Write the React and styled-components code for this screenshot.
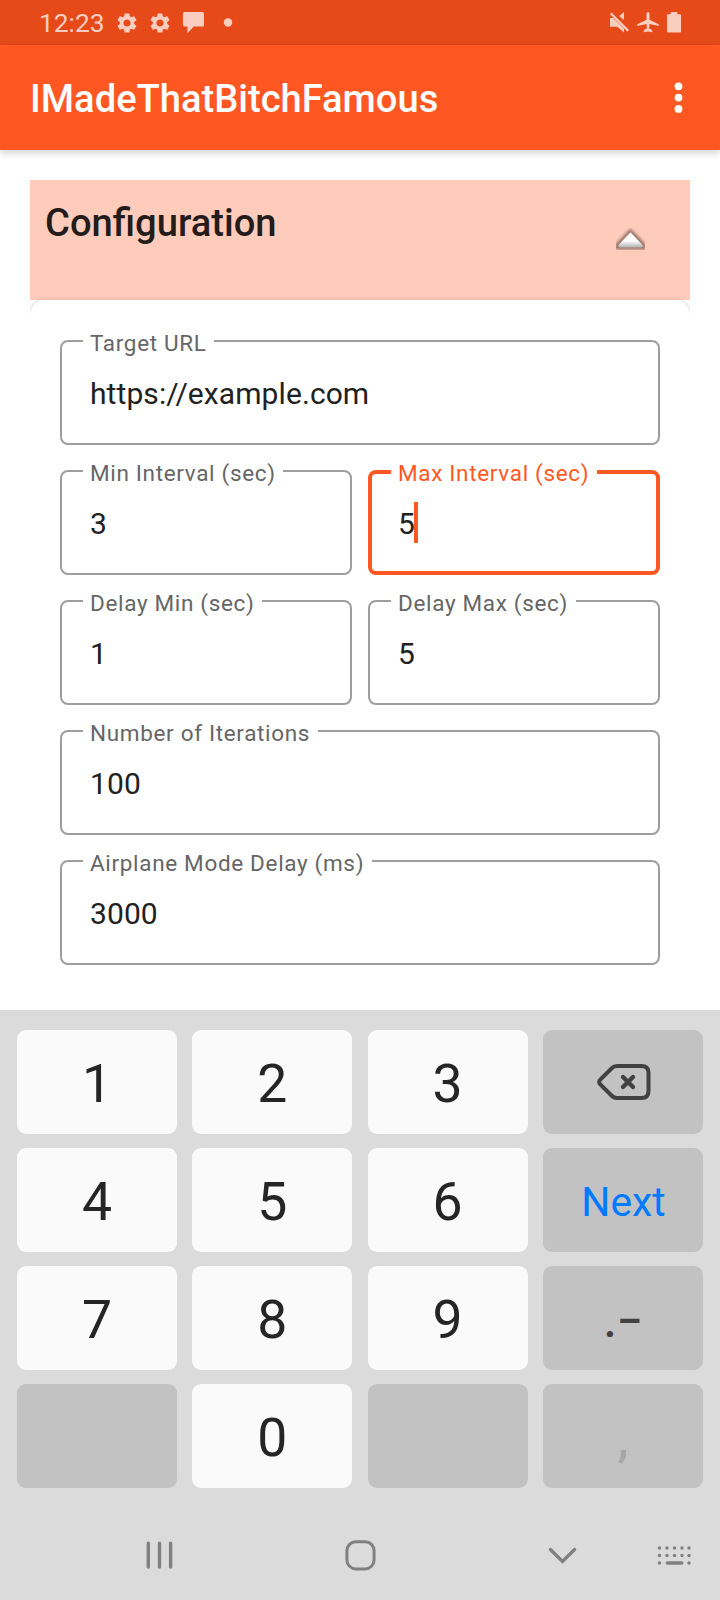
import React from "react";
import styled, { createGlobalStyle } from "styled-components";
import { MdSettings } from "react-icons/md";

const GlobalStyle = createGlobalStyle`
  *, *::before, *::after { box-sizing: border-box; }
  html, body { margin: 0; padding: 0; background: #fff; }
  body { font-family: Roboto, "Noto Sans", sans-serif; }
  svg { display: block; flex: none; }
`;

const Screen = styled.div`
  width: 720px;
  height: 1600px;
  display: flex;
  flex-direction: column;
  overflow: hidden;
  background: #fff;
`;

const StatusBar = styled.header`
  height: 45px;
  flex: none;
  display: flex;
  justify-content: space-between;
  padding: 0 39px;
  background: #e64a19;
  color: #facdc1;
`;

const StatusGroup = styled.div`
  display: flex;
  align-items: center;
  height: 45px;
  gap: ${(p) => p.$gap}px;
`;

const Clock = styled.span`
  font-size: 26.3px;
  line-height: 45px;
  width: 67px;
  padding-top: 1px;
  margin-right: 9px;
`;

const AppBar = styled.div`
  height: 105px;
  flex: none;
  display: flex;
  align-items: center;
  justify-content: space-between;
  padding: 0 36px 0 30px;
  background: #ff5722;
  color: #fff;
  box-shadow: 0 3px 8px rgba(0, 0, 0, 0.18);
`;

const Title = styled.h1`
  margin: 2px 0 0;
  font-size: 38.12px;
  line-height: 44px;
  font-weight: 500;
`;

const Content = styled.main`
  flex: 1;
  min-height: 0;
  display: flex;
  flex-direction: column;
  padding: 30px 30px 0;
`;

const SectionHeader = styled.div`
  height: 120px;
  flex: none;
  display: flex;
  justify-content: space-between;
  padding: 0 44px 0 15px;
  background: #ffccbc;
`;

const SectionTitle = styled.h2`
  margin: 21px 0 0;
  font-size: 38.15px;
  line-height: 44px;
  font-weight: 500;
  color: #231c1a;
`;

const ExpandIcon = styled.svg`
  margin-top: 48px;
`;

const Card = styled.section`
  flex: 1;
  display: flex;
  flex-direction: column;
  gap: 25px;
  padding: 40px 30px 0;
  border-radius: 15px 15px 0 0;
  background: #fff;
  box-shadow: 0 2px 6px rgba(0, 0, 0, 0.32);
  clip-path: inset(-10px 0 0 0);
`;

const FieldRow = styled.div`
  display: grid;
  grid-auto-flow: column;
  grid-auto-columns: minmax(0, 1fr);
  gap: 16px;
`;

const FieldBox = styled.div`
  height: 105px;
  border: ${(p) => (p.$focused ? "4px solid #ff5722" : "2px solid #9e9e9e")};
  border-radius: 8px;
  padding-left: ${(p) => (p.$focused ? 19 : 21)}px;
`;

const FieldLabel = styled.label`
  display: block;
  width: fit-content;
  height: 28px;
  margin-top: ${(p) => (p.$focused ? -15 : -13)}px;
  padding: 0 7.5px 0 7px;
  background: #fff;
  font-size: 22.5px;
  line-height: 28px;
  letter-spacing: 0.67px;
  white-space: nowrap;
  color: ${(p) => (p.$focused ? "#ff5722" : "#666")};
`;

const FieldValue = styled.div`
  display: flex;
  align-items: center;
  height: 42px;
  margin-top: 16px;
  padding-left: 7px;
  font-size: 30px;
  line-height: 42px;
  letter-spacing: 0.08px;
  color: #212121;
`;

const Caret = styled.span`
  width: 4px;
  height: 41px;
  margin-left: -1px;
  margin-top: -4px;
  background: #ff5722;
`;

const Keyboard = styled.div`
  height: 590px;
  flex: none;
  display: flex;
  flex-direction: column;
  background: #dbdbdb;
`;

const Keys = styled.div`
  display: grid;
  grid-template-columns: repeat(4, 160px);
  grid-auto-rows: 104px;
  justify-content: space-between;
  row-gap: 14px;
  padding: 20px 17px 0;
`;

const Key = styled.div`
  display: flex;
  align-items: center;
  justify-content: center;
  border-radius: 9px;
  background: ${(p) => (p.$dark ? "#c2c2c2" : "#fafafa")};
  color: ${(p) => p.$color || "#252525"};
  font-size: ${(p) => p.$size || 53.5}px;
  font-weight: ${(p) => p.$weight || 400};
  line-height: 1;
  padding-top: ${(p) => p.$drop || 0}px;
  padding-left: ${(p) => p.$shift || 0}px;
`;

const NavBar = styled.nav`
  display: flex;
  align-items: center;
  height: 92px;
  margin-top: 22px;
  padding-left: 144px;
`;

const NavIcon = styled.svg`
  margin-right: ${(p) => p.$after || 0}px;
`;

const ChatIcon = () => (
  <svg width="23" height="22" viewBox="-2 0 23 22">
    <path fill="currentColor" d="M1.500 0h18A1.500 1.500 0 0 1 21 1.500v11.500a1.500 1.500 0 0 1-1.500 1.500H10.800L4.400 21.200V14.500H1.500A1.500 1.500 0 0 1 0 13V1.500A1.500 1.500 0 0 1 1.500 0z" />
  </svg>
);

const MuteIcon = () => (
  <svg width="19" height="21" viewBox="0 0 19 21">
    <g fill="currentColor">
      <path d="M9.200 3.900L14 0v7.500L12.800 7.300z" />
      <path d="M0 6h3.200L14 16.800V20.500L7.200 14.800H0z" />
      <path d="M0 2.200L1.500 0.600L19 18.100L17.500 19.700z" />
    </g>
  </svg>
);

const PlaneIcon = () => (
  <svg width="22" height="21" viewBox="0 0 22 21">
    <path fill="currentColor" d="M11 0c1 0 1.500 1.100 1.500 2.200v5.500L21.700 12.200v1.700L12.500 12l-.4 4.600c2 .7 3.200 1.700 3.300 3.100v.6L11 19.500 6.600 20.300v-.6c.1-1.400 1.300-2.400 3.300-3.100L9.500 12 .3 13.900v-1.700L9.500 7.700V2.200C9.500 1.100 10 0 11 0z" />
  </svg>
);

const BatteryIcon = () => (
  <svg width="14" height="21" viewBox="0 0 14 21">
    <path fill="currentColor" d="M3.700 0h6.600v2.200H13a1 1 0 0 1 1 1V19.500a1 1 0 0 1-1 1H1a1 1 0 0 1-1-1V3.200a1 1 0 0 1 1-1h2.700z" />
  </svg>
);

const CollapseArrow = () => (
  <ExpandIcon width="31" height="23" viewBox="0 0 31 23">
    <defs>
      <linearGradient id="arrowFill" x1="0" y1="0" x2="0" y2="1">
        <stop offset="0.550" stopColor="#fff" />
        <stop offset="1" stopColor="#b0b0b0" />
      </linearGradient>
      <filter id="arrowShade" x="-20%" y="-20%" width="140%" height="140%">
        <feGaussianBlur stdDeviation="1.600" />
      </filter>
      <clipPath id="arrowClip">
        <rect x="1" y="0" width="29" height="22" />
      </clipPath>
    </defs>
    <g clipPath="url(#arrowClip)">
      <path d="M15.500 0.500L31 16.500v5H0v-5z" fill="#5a3a34" opacity="0.600" filter="url(#arrowShade)" />
      <path d="M15.500 4.300L28 17.500L27 19.500H4L3 17.500z" fill="url(#arrowFill)" />
    </g>
  </ExpandIcon>
);

const BackspaceIcon = () => (
  <svg width="56" height="40" viewBox="0 0 56 40" fill="none" stroke="#414141" strokeLinecap="round" strokeLinejoin="round">
    <path strokeWidth="4" d="M21 4H45.500Q52.500 4 52.500 11V29Q52.500 36 45.500 36H21Q18 36 16 34L4.300 22.300Q2 20 4.300 17.700L16 6Q18 4 21 4z" />
    <path strokeWidth="4.400" d="M27 15L37 25M37 15L27 25" />
  </svg>
);

const Field = ({ label, value, focused }) => (
  <FieldBox $focused={focused}>
    <FieldLabel $focused={focused}>{label}</FieldLabel>
    <FieldValue>
      {value}
      {focused && <Caret />}
    </FieldValue>
  </FieldBox>
);

const fieldRows = [
  [{ label: "Target URL", value: "https://example.com" }],
  [
    { label: "Min Interval (sec)", value: "3" },
    { label: "Max Interval (sec)", value: "5", focused: true },
  ],
  [
    { label: "Delay Min (sec)", value: "1" },
    { label: "Delay Max (sec)", value: "5" },
  ],
  [{ label: "Number of Iterations", value: "100" }],
  [{ label: "Airplane Mode Delay (ms)", value: "3000" }],
];

const keys = [
  { label: "1", drop: 4 },
  { label: "2", drop: 4 },
  { label: "3", drop: 4 },
  { label: <BackspaceIcon />, dark: true, shift: 2 },
  { label: "4", drop: 4 },
  { label: "5", drop: 4 },
  { label: "6", drop: 4 },
  { label: "Next", dark: true, color: "#007aff", size: 40.8, drop: 4, shift: 1 },
  { label: "7", drop: 4 },
  { label: "8", drop: 4 },
  { label: "9", drop: 4 },
  { label: ".\u2212", dark: true, color: "#414141", size: 46, weight: 500, drop: 6 },
  { label: "", dark: true },
  { label: "0", drop: 4 },
  { label: "", dark: true },
  { label: ",", dark: true, color: "#a6a6a6", size: 50, weight: 500, drop: 6 },
];

export default function App() {
  return (
    <>
      <GlobalStyle />
      <Screen>
        <StatusBar>
          <StatusGroup $gap={0}>
            <Clock>12:23</Clock>
            <StatusGroup $gap={9}>
              <MdSettings size={24} />
              <MdSettings size={24} />
              <ChatIcon />
              <svg width="28" height="10" viewBox="0 0 28 10">
                <circle cx="15" cy="4.500" r="4.200" fill="currentColor" />
              </svg>
            </StatusGroup>
          </StatusGroup>
          <StatusGroup $gap={8}>
            <MuteIcon />
            <PlaneIcon />
            <BatteryIcon />
          </StatusGroup>
        </StatusBar>
        <AppBar>
          <Title>IMadeThatBitchFamous</Title>
          <svg width="11" height="32" viewBox="0 0 11 32" fill="currentColor">
            <circle cx="5.500" cy="4.300" r="3.900" />
            <circle cx="5.500" cy="15.600" r="3.900" />
            <circle cx="5.500" cy="26.900" r="3.900" />
          </svg>
        </AppBar>
        <Content>
          <SectionHeader>
            <SectionTitle>Configuration</SectionTitle>
            <CollapseArrow />
          </SectionHeader>
          <Card>
            {fieldRows.map((row, i) => (
              <FieldRow key={i}>
                {row.map((f) => (
                  <Field key={f.label} {...f} />
                ))}
              </FieldRow>
            ))}
          </Card>
        </Content>
        <Keyboard>
          <Keys>
            {keys.map((k, i) => (
              <Key key={i} $dark={k.dark} $color={k.color} $size={k.size} $weight={k.weight} $drop={k.drop} $shift={k.shift}>
                {k.label}
              </Key>
            ))}
          </Keys>
          <NavBar>
            <NavIcon $after={170} width="30" height="30" viewBox="0 0 30 30" stroke="#808080" strokeWidth="3.400" strokeLinecap="round">
              <path d="M4.300 3.200V27.100M15.500 3.200V27.100M26.600 3.200V27.100" />
            </NavIcon>
            <NavIcon $after={171} width="32" height="32" viewBox="0 0 32 32" fill="none" stroke="#808080" strokeWidth="3">
              <rect x="2.900" y="2.700" width="27.200" height="27.200" rx="9" />
            </NavIcon>
            <NavIcon $after={80} width="30" height="30" viewBox="0 0 30 30" fill="none" stroke="#808080" strokeWidth="3.300" strokeLinecap="round">
              <path d="M3.400 9.500L15.500 21.500L27.600 9.500" />
            </NavIcon>
            <NavIcon width="34" height="20" viewBox="0 -0.500 34 20" fill="#808080">
              {[2.5, 10, 17.5, 25, 32].map((x) => (
                <React.Fragment key={x}>
                  <circle cx={x} cy="2.500" r="1.750" />
                  <circle cx={x} cy="10" r="1.750" />
                </React.Fragment>
              ))}
              <circle cx="2.500" cy="17.500" r="1.750" />
              <rect x="8.500" y="15.700" width="18" height="3.600" rx="1.800" />
              <circle cx="32" cy="17.500" r="1.750" />
            </NavIcon>
          </NavBar>
        </Keyboard>
      </Screen>
    </>
  );
}
